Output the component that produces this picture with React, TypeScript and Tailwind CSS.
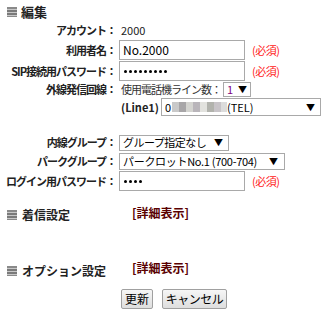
import React from "react";

const font = { fontFamily: '"Noto Sans CJK JP", "Noto Sans", sans-serif' };

function Icon() {
  return (
    <span className="inline-flex flex-col w-[10px] h-[10px] shrink-0">
      <span className="h-[2px] bg-[#8a8a8a]" />
      <span className="h-[1px] bg-[#c8c8c8]" />
      <span className="h-[2px] bg-[#7a7a7a]" />
      <span className="h-[1px] bg-[#c8c8c8]" />
      <span className="h-[2px] bg-[#7a7a7a]" />
      <span className="h-[1px] bg-[#c8c8c8]" />
      <span className="h-[1px] bg-[#8a8a8a]" />
    </span>
  );
}

function Label({ children }: { children: React.ReactNode }) {
  return (
    <div className="w-[117px] shrink-0 text-right font-bold text-[11px] tracking-[-1px] text-[#222] pr-[1px]">
      {children}
    </div>
  );
}

function Req() {
  return <span className="ml-[7px] text-[11px] text-[#ff2020] tracking-[-0.5px]">(必須)</span>;
}

function Arrow() {
  return <span className="text-[9px] text-black leading-none">▼</span>;
}

function Dots({ n }: { n: number }) {
  return (
    <span className="flex items-center gap-[2px]">
      {Array.from({ length: n }).map((_, i) => (
        <span key={i} className="w-[3px] h-[3px] rounded-full bg-black" />
      ))}
    </span>
  );
}

export default function App() {
  return (
    <div className="w-[334px] h-[315px] bg-white relative text-[#222]" style={font}>
      <div className="flex items-center h-[22px] pl-[7px] pt-[1px] gap-[4px]">
        <Icon />
        <span className="font-bold text-[13px] text-[#222]">編集</span>
      </div>

      <div className="flex items-center h-[17px]">
        <Label>アカウント：</Label>
        <span className="ml-[4px] text-[11px]">2000</span>
      </div>

      <div className="flex items-center h-[21px] pt-[1px]">
        <Label>利用者名：</Label>
        <div className="ml-[2px] w-[126px] h-[20px] border border-[#a9a9a9] flex items-center px-[3px] text-[12px] text-black">
          No.2000
        </div>
        <Req />
      </div>

      <div className="flex items-center h-[21px] pt-[1px]">
        <Label>SIP接続用パスワード：</Label>
        <div className="ml-[2px] w-[126px] h-[20px] border border-[#a9a9a9] flex items-center px-[4px]">
          <Dots n={9} />
        </div>
        <Req />
      </div>

      <div className="flex items-center h-[16px]">
        <Label>外線発信回線：</Label>
        <span className="ml-[4px] text-[11px] tracking-[-1px] text-[#333]">使用電話機ライン数：</span>
        <div className="ml-[2px] w-[28px] h-[15px] border border-[#a9a9a9] flex items-center justify-between px-[3px]">
          <span className="text-[11px] text-[#800080]">1</span>
          <Arrow />
        </div>
      </div>

      <div className="flex items-center h-[19px] pt-[1px]">
        <div className="w-[117px] shrink-0" />
        <span className="ml-[4px] font-bold text-[11px] text-[#222]">(Line1)</span>
        <div className="ml-[2px] w-[160px] h-[18px] border border-[#a9a9a9] flex items-center pl-[3px] pr-[5px]">
          <span className="text-[11px] text-black">0</span>
          <span className="flex h-[10px] ml-[1px]">
            <span className="w-[7px] bg-[#c9c9c9]" />
            <span className="w-[7px] bg-[#a8a6a8]" />
            <span className="w-[7px] bg-[#d4d4d0]" />
            <span className="w-[7px] bg-[#b9b5ba]" />
            <span className="w-[7px] bg-[#e2e2de]" />
            <span className="w-[7px] bg-[#b2b3ad]" />
            <span className="w-[7px] bg-[#c8c4c8]" />
            <span className="w-[6px] bg-[#dcdcdc]" />
          </span>
          <span className="text-[11px] text-black">(TEL)</span>
          <span className="flex-1" />
          <Arrow />
        </div>
      </div>

      <div className="h-[18px]" />

      <div className="flex items-center h-[17px]">
        <Label>内線グループ：</Label>
        <div className="ml-[2px] w-[110px] h-[16px] border border-[#a9a9a9] flex items-center justify-between pl-[3px] pr-[5px]">
          <span className="text-[11px] text-black tracking-[-0.5px]">グループ指定なし</span>
          <Arrow />
        </div>
      </div>

      <div className="flex items-center h-[19px] pt-[1px]">
        <Label>パークグループ：</Label>
        <div className="ml-[2px] w-[166px] h-[17px] border border-[#a9a9a9] flex items-center justify-between pl-[3px] pr-[6px]">
          <span className="text-[11px] text-black tracking-[-0.3px]">パークロットNo.1 (700-704)</span>
          <Arrow />
        </div>
      </div>

      <div className="flex items-center h-[21px] pt-[1px]">
        <Label>ログイン用パスワード：</Label>
        <div className="ml-[2px] w-[126px] h-[20px] border border-[#a9a9a9] flex items-center px-[4px]">
          <Dots n={4} />
        </div>
        <Req />
      </div>

      <div className="flex items-center h-[20px] mt-[12px]">
        <div className="flex items-center w-[132px] pl-[7px] pt-[3px] gap-[5px]">
          <Icon />
          <span className="font-bold text-[12px] text-[#222]">着信設定</span>
        </div>
        <span className="font-bold text-[12px] text-[#5a0000]">[詳細表示]</span>
      </div>

      <div className="flex items-center h-[20px] mt-[35px]">
        <div className="flex items-center w-[132px] pl-[7px] pt-[6px] gap-[5px]">
          <Icon />
          <span className="font-bold text-[12px] text-[#222]">オプション設定</span>
        </div>
        <span className="font-bold text-[12px] text-[#5a0000] pb-[1px]">[詳細表示]</span>
      </div>

      <div className="flex items-center mt-[11px] pl-[121px] gap-[9px]">
        <button className="h-[20px] w-[32px] border border-[#a0a0a0] bg-gradient-to-b from-[#f6f6f6] to-[#dedede] text-[12px] text-black rounded-[2px]">
          更新
        </button>
        <button className="h-[20px] w-[65px] border border-[#a0a0a0] bg-gradient-to-b from-[#f6f6f6] to-[#dedede] text-[12px] text-black rounded-[2px] tracking-[-0.5px]">
          キャンセル
        </button>
      </div>
    </div>
  );
}
